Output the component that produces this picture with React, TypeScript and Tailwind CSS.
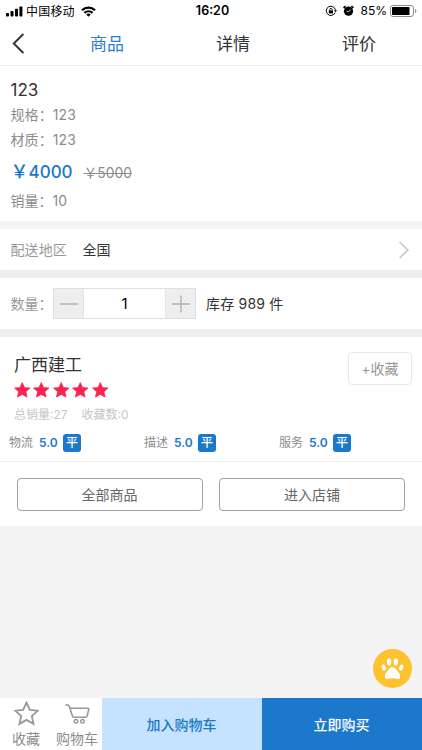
const STAR_PATH = "M12 1.5l3.2 7 7.6.8-5.7 5.1 1.6 7.5L12 18.1l-6.7 3.8 1.6-7.5L1.2 9.3l7.6-.8z";

const ratings = [
  { label: "物流", score: "5.0" },
  { label: "描述", score: "5.0" },
  { label: "服务", score: "5.0" },
];

function StatusBar() {
  return (
    <div className="grid h-[22px] grid-cols-3 items-center pr-[5px] pl-[6px] text-[12px] text-black">
      <div className="flex items-center">
        <svg width="17" height="11" viewBox="0 0 17 11" fill="currentColor">
          <rect x="0" y="7" width="3" height="3.5" rx="0.8" />
          <rect x="4.5" y="5" width="3" height="5.5" rx="0.8" />
          <rect x="9" y="2.7" width="3" height="7.8" rx="0.8" />
          <rect x="13.4" y="0.5" width="3" height="10" rx="0.8" />
        </svg>
        <span className="mt-px ml-[3px] tracking-[0.2px]">中国移动</span>
        <svg className="ml-[6px]" width="15" height="11" viewBox="0 0 15 11" fill="none" stroke="currentColor" strokeWidth="2.2">
          <path d="M1 4.2a9.3 9.3 0 0 1 13 0" />
          <path d="M3.5 6.9a5.7 5.7 0 0 1 8 0" />
          <path d="M7.5 10.8L5.3 8.6a3.1 3.1 0 0 1 4.4 0z" fill="currentColor" stroke="none" />
        </svg>
      </div>
      <div className="pl-[2px] text-center text-[12.5px] font-semibold">16:20</div>
      <div className="flex items-center justify-end">
        <svg width="12" height="12" viewBox="0 0 12 12" fill="none" stroke="currentColor">
          <path d="M10.1 7.6A4.6 4.6 0 1 1 10.4 5.2" />
          <path d="M9 5.2h3l-1.5 2z" fill="currentColor" stroke="none" />
          <rect x="3.8" y="5.4" width="4.2" height="3" fill="currentColor" stroke="none" />
          <path d="M4.7 5.5V4.6a1.2 1.2 0 0 1 2.4 0v.9" strokeWidth="0.9" />
        </svg>
        <svg className="ml-[6px]" width="11" height="12" viewBox="0 0 11 12">
          <circle cx="5.5" cy="6.2" r="4.6" fill="currentColor" />
          <path d="M.6 3l2-1.7M10.4 3l-2-1.7" stroke="currentColor" strokeWidth="1.8" />
          <path d="M5.5 6.8L7.7 4.6M5.5 6.8L3.8 6.2" stroke="#fff" strokeWidth="0.8" />
        </svg>
        <span className="ml-[6px]">85%</span>
        <svg className="ml-[3px]" width="27" height="12" viewBox="0 0 27 12">
          <rect x="0.5" y="0.5" width="23" height="11" rx="2.4" fill="none" stroke="#8c8c8c" />
          <rect x="2" y="2" width="17.5" height="8" rx="0.8" fill="currentColor" />
          <path d="M25 4v4q1.4-.6 1.4-2T25 4z" fill="#8c8c8c" />
        </svg>
      </div>
    </div>
  );
}

function Header() {
  return (
    <header className="flex h-[44px] items-center border-b border-[#ececec] text-[17px] text-[#333]">
      <svg className="ml-[12px] shrink-0" width="13" height="21" viewBox="0 0 13 21" fill="none" stroke="currentColor" strokeWidth="1.9">
        <path d="M11.4 1l-9.6 9.5 9.6 9.5" />
      </svg>
      <nav className="mt-[2px] ml-[19px] flex flex-1">
        <span className="w-[126px] text-center text-[#2a7fcd]">商品</span>
        <span className="w-[126px] text-center">详情</span>
        <span className="w-[126px] text-center">评价</span>
      </nav>
    </header>
  );
}

function ProductInfo() {
  return (
    <section className="h-[155px] bg-white px-[10.5px] text-[14px] text-[#8c8c8c]">
      <h1 className="pt-[11px] text-[17px] leading-[26px] text-[#333]">123</h1>
      <p className="-mt-px leading-[25px] tracking-[0.1px]">规格：123</p>
      <p className="leading-[25px] tracking-[0.1px]">材质：123</p>
      <div className="flex h-[38px] items-center pt-[2px]">
        <span className="text-[18px] font-medium text-[#1b78ca]">
          ￥<span className="text-[17px]">4000</span>
        </span>
        <span className="mt-[3px] ml-[11px] text-[13.8px] line-through">￥5000</span>
      </div>
      <p className="leading-[21px]">销量：10</p>
    </section>
  );
}

function DeliveryRow() {
  return (
    <section className="flex h-[41px] items-center bg-white pr-[12px] pl-[10.5px] text-[14px]">
      <span className="tracking-[0.1px] text-[#999]">配送地区</span>
      <span className="ml-[15.5px] text-[#333]">全国</span>
      <svg className="ml-auto" width="12" height="18" viewBox="0 0 12 18" fill="none" stroke="#c8c8c8" strokeWidth="1.7">
        <path d="M1.5 1l8.3 8-8.3 8" />
      </svg>
    </section>
  );
}

function QuantityRow() {
  return (
    <section className="flex h-[51px] items-center bg-white pl-[10.5px] text-[14px]">
      <span className="w-[42.5px] text-[#999]">数量：</span>
      <div className="flex h-[31px] w-[143px] border border-[#dfdfdf]">
        <button className="flex w-[30px] items-center justify-center border-r border-[#e4e4e4] bg-[#eee]">
          <span className="h-[2px] w-[18px] bg-[#c2c2c2]" />
        </button>
        <span className="flex flex-1 items-center justify-center pt-px text-[15px] text-black">1</span>
        <button className="flex w-[30px] items-center justify-center border-l border-[#e4e4e4] bg-[#eee]">
          <svg width="18" height="18" viewBox="0 0 18 18" stroke="#bdbdbd" strokeWidth="1.8">
            <path d="M0 9h18M9 0.5v17" />
          </svg>
        </button>
      </div>
      <span className="ml-[10px] tracking-[0.2px] text-[#333]">库存 989 件</span>
    </section>
  );
}

function StoreCard() {
  return (
    <section className="h-[189px] bg-white">
      <div className="flex h-[91px] justify-between pr-[10px] pl-[14px]">
        <div>
          <h2 className="pt-[15px] text-[17px] leading-[26px] text-[#333]">广西建工</h2>
          <div className="mt-[3px] flex gap-[2.9px]">
            {[0, 1, 2, 3, 4].map((i) => (
              <svg key={i} width="16.5" height="18" viewBox="0.5 0.5 23 23" fill="#fb2350" stroke="#fb2350" strokeLinejoin="round">
                <path d={STAR_PATH} />
              </svg>
            ))}
          </div>
          <p className="mt-[7px] flex gap-[14px] text-[12px] leading-[18px] text-[#c5c5c5]">
            <span>总销量:27</span>
            <span>收藏数:0</span>
          </p>
        </div>
        <button className="mt-[15px] flex h-[33px] w-[64px] items-center justify-center rounded-[4px] border border-[#e8e8e8] text-[14px] text-[#999]">
          +收藏
        </button>
      </div>
      <div className="flex h-[34px] border-b border-[#ececec] pl-[9px] text-[12px]">
        {ratings.map((item) => (
          <div key={item.label} className="flex h-[29px] w-[135px] items-center">
            <span className="text-[#8c8c8c]">{item.label}</span>
            <span className="ml-[6px] w-[19px] font-semibold text-[#1b78ca]">{item.score}</span>
            <span className="ml-[5px] flex h-[18px] w-[18px] items-center justify-center rounded-[3px] bg-[#1b78ca] font-medium text-white">
              平
            </span>
          </div>
        ))}
      </div>
      <div className="grid grid-cols-2 gap-[16px] px-[17px] pt-[16px] text-[14px] text-[#666]">
        <button className="h-[33px] rounded-[4px] border border-[#a0a0a0] pr-px pb-px">全部商品</button>
        <button className="h-[33px] rounded-[4px] border border-[#a0a0a0] pb-px">进入店铺</button>
      </div>
    </section>
  );
}

function BottomBar() {
  return (
    <footer className="flex h-[52px] bg-white text-[14px] text-[#8c8c8c]">
      <div className="flex w-[52px] flex-col items-center pt-[3px]">
        <svg width="25" height="25" viewBox="0 0 24 24" fill="none" stroke="#999" strokeWidth="1.8">
          <path d={STAR_PATH} />
        </svg>
        <span className="mt-[2px] leading-[22px]">收藏</span>
      </div>
      <div className="flex w-[50px] flex-col items-center pt-[5px]">
        <svg width="25" height="23" viewBox="0 0 25 23" fill="none" stroke="#999" strokeWidth="1.6">
          <path
            d="M.3 2h2.6q1 0 1.3 1l3.2 10q.4 1.300 1.700 1.300h11.400q1.300 0 1.600-1.200l1.700-6.800q.2-1.100-.9-1.100H5"
            strokeLinejoin="round"
          />
          <circle cx="11" cy="18.3" r="1.8" strokeWidth="1.4" />
          <circle cx="17.5" cy="18.3" r="1.8" strokeWidth="1.4" />
        </svg>
        <span className="mt-[2px] leading-[22px]">购物车</span>
      </div>
      <button className="w-[160px] bg-[#c5e2ff] pr-px font-medium text-[#1b78ca]">加入购物车</button>
      <button className="flex-1 bg-[#1b78ca] pr-px font-medium text-white">立即购买</button>
    </footer>
  );
}

function PawButton() {
  return (
    <button className="absolute right-[10px] bottom-[62px] flex h-[39px] w-[39px] items-center justify-center rounded-full bg-[#fec22f]">
      <svg width="23" height="23" viewBox="0 0 23 23" fill="#fff">
        <ellipse cx="8.2" cy="4.9" rx="2.2" ry="3.7" />
        <ellipse cx="14.8" cy="4.9" rx="2.2" ry="3.7" />
        <ellipse cx="2.8" cy="10.6" rx="2" ry="3.2" transform="rotate(-15 2.8 10.6)" />
        <ellipse cx="20.2" cy="10.6" rx="2" ry="3.2" transform="rotate(15 20.2 10.6)" />
        <path d="M11.5 10.2c2.800 0 3.900 2.600 5.800 4.900 1.500 1.900 2.300 3.700 1.600 5.900-.6 1.900-4.500.2-7.400.2s-6.800 1.700-7.400-.2c-.7-2.200.1-4 1.600-5.900 1.900-2.300 3-4.900 5.800-4.900z" />
      </svg>
    </button>
  );
}

export default function App() {
  return (
    <div className="relative flex h-[750px] w-[422px] flex-col overflow-hidden bg-[#f4f4f4] font-[Inter,'Noto_Sans_CJK_SC',sans-serif] whitespace-nowrap">
      <div className="bg-white">
        <StatusBar />
        <Header />
      </div>
      <ProductInfo />
      <div className="mt-[8px] flex flex-col gap-[8px] bg-[#eee]">
        <DeliveryRow />
        <QuantityRow />
        <StoreCard />
      </div>
      <div className="mt-auto">
        <BottomBar />
      </div>
      <PawButton />
    </div>
  );
}
